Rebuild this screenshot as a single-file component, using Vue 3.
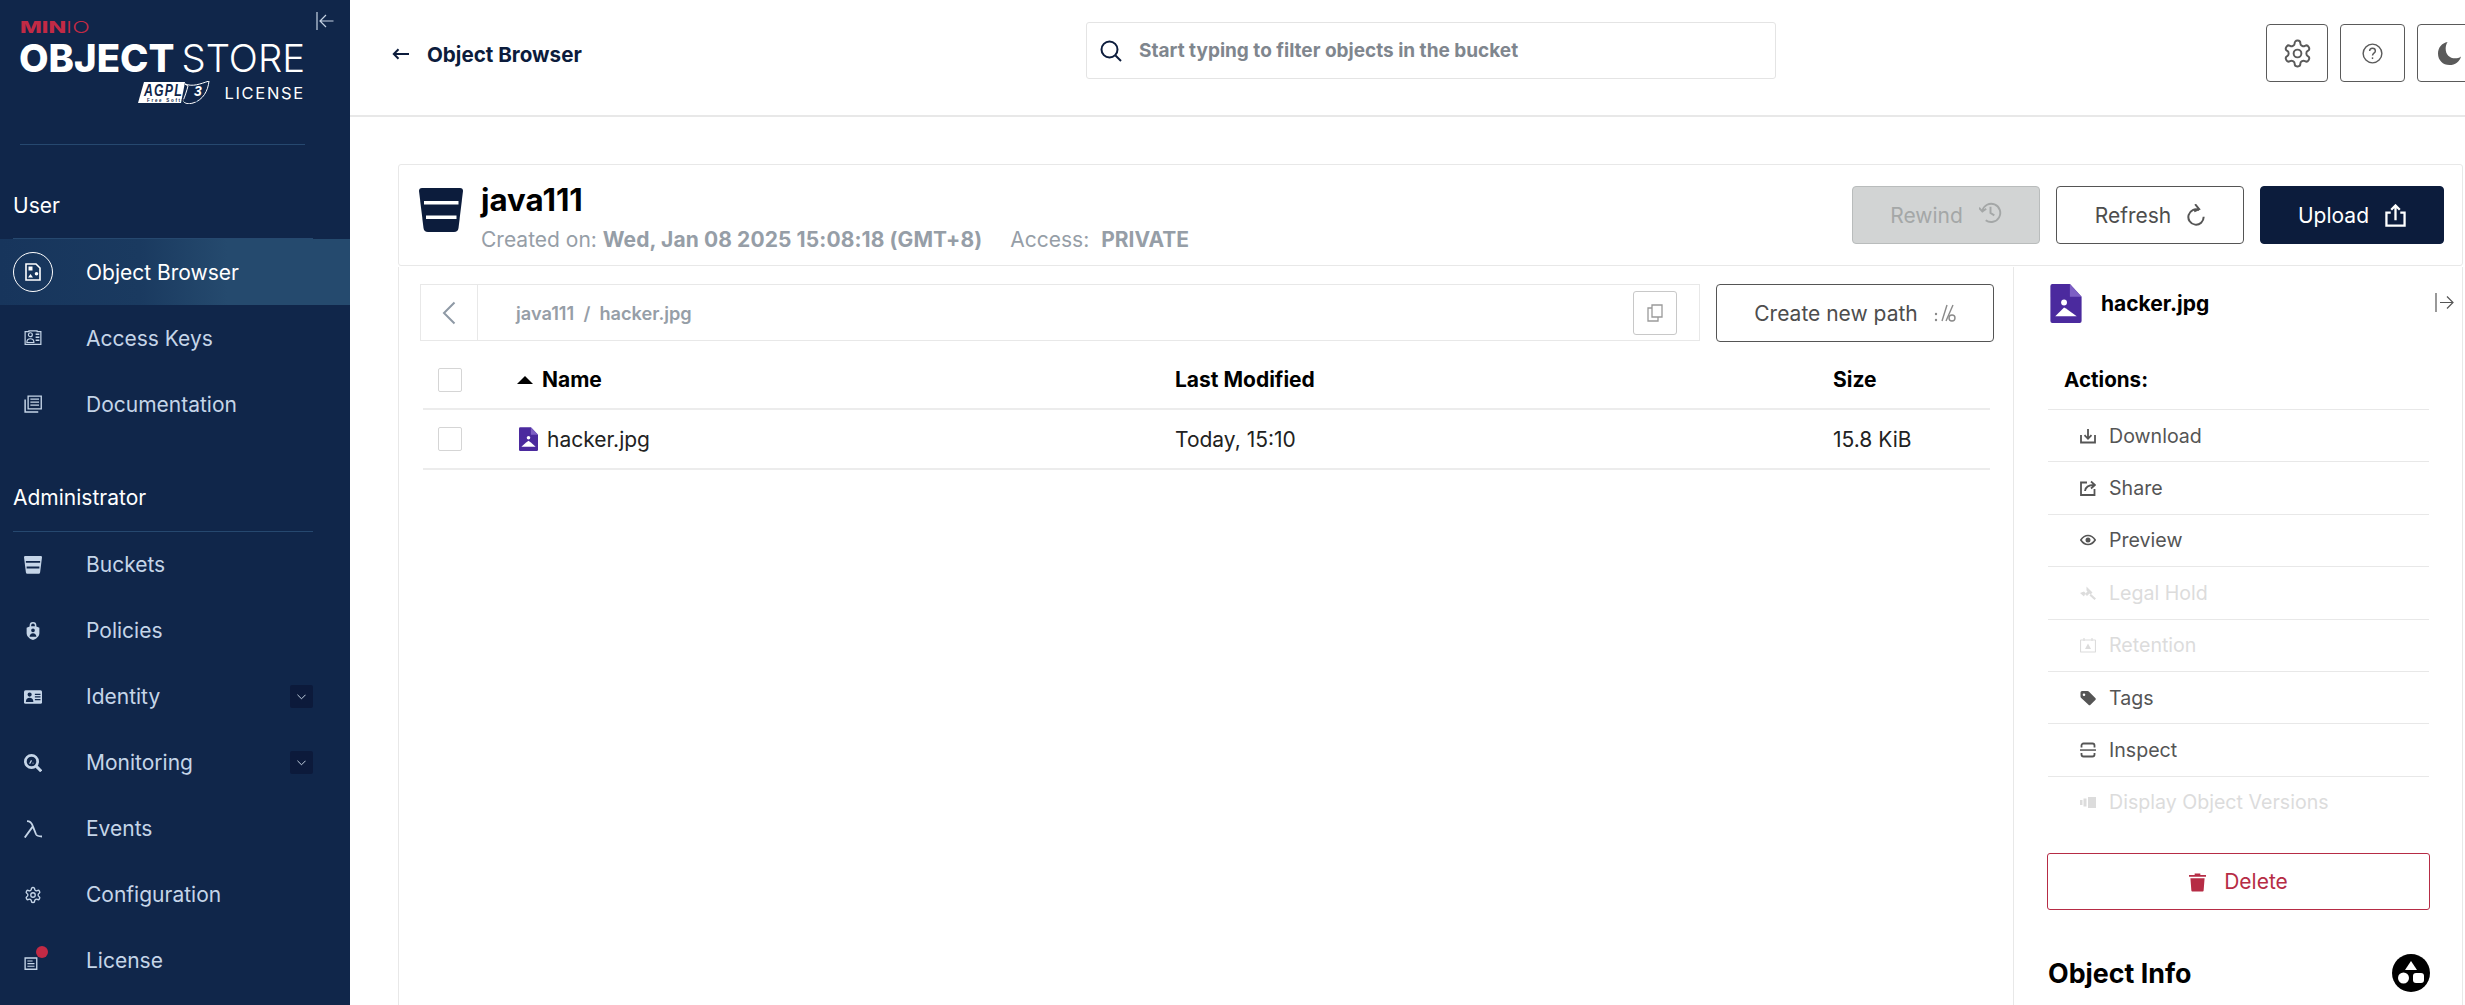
<script setup>
const GEAR = 'M12.22 2h-.44a2 2 0 0 0-2 2v.18a2 2 0 0 1-1 1.73l-.43.25a2 2 0 0 1-2 0l-.15-.08a2 2 0 0 0-2.73.73l-.22.38a2 2 0 0 0 .73 2.73l.15.1a2 2 0 0 1 1 1.72v.51a2 2 0 0 1-1 1.74l-.15.09a2 2 0 0 0-.73 2.73l.22.38a2 2 0 0 0 2.73.73l.15-.08a2 2 0 0 1 2 0l.43.25a2 2 0 0 1 1 1.73V20a2 2 0 0 0 2 2h.44a2 2 0 0 0 2-2v-.18a2 2 0 0 1 1-1.73l.43-.25a2 2 0 0 1 2 0l.15.08a2 2 0 0 0 2.73-.73l.22-.39a2 2 0 0 0-.73-2.73l-.15-.08a2 2 0 0 1-1-1.74v-.5a2 2 0 0 1 1-1.74l.15-.09a2 2 0 0 0 .73-2.73l-.22-.38a2 2 0 0 0-2.73-.73l-.15.08a2 2 0 0 1-2 0l-.43-.25a2 2 0 0 1-1-1.73V4a2 2 0 0 0-2-2zM12 9a3 3 0 1 0 0 6 3 3 0 0 0 0-6z'

const userItems = [
  { label: 'Access Keys', paths: [
    { s: 'M1.500 3.500h5v-1h11v1h5v17h-21z', w: 1.600 },
    { s: 'M8.500 5a2.600 2.600 0 1 0 0 5.200 2.600 2.600 0 0 0 0-5.200zM3.800 18c0-3.400 2-5 4.700-5s4.700 1.600 4.700 5z', w: 1.600 },
    { s: 'M15.500 7h5M15.500 11h5M15.500 15h5', w: 1.800 }
  ] },
  { label: 'Documentation', paths: [
    { s: 'M5.500 1.500h17.500v17H5.500z', w: 1.800 },
    { s: 'M8.500 5.500h11.500M8.500 9.500h11.500M8.500 13.500h11.500', w: 1.800 },
    { s: 'M1.500 6v16.500h17.500', w: 2 }
  ] }
]

const adminItems = [
  { label: 'Buckets', paths: [
    { f: 'M0 1.500Q0 0 1.500 0h21Q24 0 24 1.500L21.500 21.500q-.2 2-2 2h-15q-1.800 0-2-2z' },
    { f: 'M2.500 6.500h19V9h-19zM3.500 14h17v2.800H3.500z', c: '#10264a' }
  ] },
  { label: 'Policies', paths: [
    { f: 'M12 0a4.500 4.500 0 0 1 4.500 4.500V6L20.500 7.500v7.500C20.500 19 16.500 22.500 12 24 7.500 22.500 3.500 19 3.500 15V7.500L7.500 6V4.500A4.500 4.500 0 0 1 12 0zm0 2a2.500 2.500 0 0 0-2.500 2.500V5.500h5V4.500A2.500 2.500 0 0 0 12 2z' },
    { f: 'M12 8.500a2.500 2.500 0 1 0 0 5 2.500 2.500 0 0 0 0-5zM7.500 19.500c0-2.800 2-4.500 4.500-4.500s4.500 1.700 4.500 4.500z', c: '#10264a' }
  ] },
  { label: 'Identity', chevron: true, paths: [
    { f: 'M2 3h20a2 2 0 0 1 2 2v14a2 2 0 0 1-2 2H2a2 2 0 0 1-2-2V5a2 2 0 0 1 2-2z' },
    { f: 'M7.500 6a2.800 2.800 0 1 0 0 5.600 2.800 2.800 0 0 0 0-5.600zM2.500 18.500c0-3.500 2.200-5.500 5-5.500s5 2 5 5.500zM14.500 7.500H22v1.800h-7.500zM14.500 11H22v1.800h-7.500zM14.500 14.500H22v1.800h-7.500z', c: '#10264a' }
  ] },
  { label: 'Monitoring', chevron: true, paths: [
    { s: 'M10 1.800a8.200 8.200 0 1 0 0 16.400 8.200 8.200 0 0 0 0-16.400z', w: 3.600 },
    { s: 'M15.500 15.500L23 23', w: 4 },
    { s: 'M7.500 13l2.500-4.500M12 12.500v-1', w: 1.600 }
  ] },
  { label: 'Events', paths: [
    { s: 'M4 1.500c4.500 0 6 1.500 7.500 6l4.500 11.500c.9 2 2.500 3 8 3M11.800 8.500L1 23.500', w: 2.400 }
  ] },
  { label: 'Configuration', paths: [
    { s: GEAR, w: 1.800 }
  ] },
  { label: 'License', badge: true, paths: [
    { s: 'M1.500 8h15.500v15H1.500z', w: 1.800 },
    { s: 'M4.500 12h7M4.500 15.500h9.500M4.500 19h9.500', w: 1.600 }
  ] }
]

const actions = [
  { label: 'Download', paths: [
    { s: 'M1 7v7.500h14V7', w: 1.800 },
    { s: 'M8 1v9.500M4.500 7.200L8 10.800l3.500-3.600', w: 1.800 }
  ] },
  { label: 'Share', paths: [
    { s: 'M7 2.500H1v12.500h13.500V9', w: 1.800 },
    { s: 'M5 11c.5-4 3-6 9-6M11 1.500L15 5l-4 3.500', w: 1.800 }
  ] },
  { label: 'Preview', paths: [
    { s: 'M.8 8C3 4.700 5.300 3.500 8 3.500S13 4.700 15.200 8C13 11.300 10.700 12.500 8 12.500S3 11.300.8 8z', w: 1.600 },
    { f: 'M8 5.500a2.500 2.500 0 1 0 0 5 2.500 2.500 0 0 0 0-5z' }
  ] },
  { label: 'Legal Hold', disabled: true, paths: [
    { f: 'M6.500 1.500l6 6-2 2-1-1L7 11 5 9l2.500-2.500-1-1zM0 8l4-1.500L5.500 8 4 11.500zM9.500 10.500l1.500-1.500 5 4.500-1.500 1.500z' }
  ] },
  { label: 'Retention', disabled: true, paths: [
    { s: 'M1 3h14a.5.5 0 0 1 .5.5v11a.5.5 0 0 1-.5.5H1a.5.5 0 0 1-.5-.5v-11A.5.5 0 0 1 1 3zM4 1v3M12 1v3', w: 1.200 },
    { f: 'M8 6.500L11 12H5z' }
  ] },
  { label: 'Tags', paths: [
    { f: 'M.5 2.500Q.5 1 2 1h5.500q.8 0 1.300.5l6.500 6.500q1 1 0 2l-4.800 4.800q-1 1-2 0L1.500 8.300Q.5 7.500.5 6.500zM4 3.500a1.300 1.300 0 1 0 0 2.600 1.300 1.300 0 0 0 0-2.600z' }
  ] },
  { label: 'Inspect', paths: [
    { s: 'M1.500 5.500V3.500a2 2 0 0 1 2-2h9a2 2 0 0 1 2 2v2M1.500 11v1.500a2 2 0 0 0 2 2h9a2 2 0 0 0 2-2V11', w: 1.800 },
    { f: 'M0 7.300h16v1.500H0z' }
  ] },
  { label: 'Display Object Versions', disabled: true, paths: [
    { f: 'M0 6h2.500v5H0zM3.500 4.500h3v8h-3zM8 3h8v11H8z' }
  ] }
]
</script>

<template>
  <div class="app">
    <aside class="sidebar">
      <div class="brand-area">
        <div class="logo">
          <div class="minio"><span class="min">MIN</span><span class="io">IO</span></div>
          <div class="product"><b>OBJECT</b><span>STORE</span></div>
          <div class="license-line">
            <svg class="agpl" viewBox="0 0 72 23">
              <path d="M6 1H47L43 22H0z" fill="#fff" />
              <path d="M47 3c8 3 15 0 24-3-1 10-6 19-16 22-5 1.500-8 .5-10-2 2-5 4-11 5-15z" fill="#10264a" stroke="#fff" stroke-width="1" />
              <text x="6" y="15" textLength="39" lengthAdjust="spacingAndGlyphs" class="agpl-t">AGPL</text>
              <text x="56" y="15" class="agpl-3">3</text>
              <text x="9" y="20.500" class="agpl-s">Free Software</text>
            </svg>
            <span>LICENSE</span>
          </div>
        </div>
        <svg class="collapse" viewBox="0 0 18 18" fill="none" stroke="#c5d2e3" stroke-width="1.200">
          <path d="M1 0v18M17.500 9H4M10 3L4 9l6 6" />
        </svg>
      </div>
      <div class="brand-rule"></div>

      <div class="section-title">User</div>
      <div class="nav-row active">
        <span class="nav-icon ring">
          <svg viewBox="0 0 16 18" width="16" height="18" fill="none" stroke="#fff" stroke-width="1.600">
            <path d="M1 1h10l4 4v12H1z" />
            <path d="M3.500 3.500h4v4h-4zM11.500 9a1.800 1.800 0 1 0 0 3.600 1.800 1.800 0 0 0 0-3.600zM5.500 11l2.500 3.500H3z" fill="#fff" stroke="none" />
          </svg>
        </span>
        <span>Object Browser</span>
      </div>
      <div v-for="item in userItems" :key="item.label" class="nav-row">
        <span class="nav-icon">
          <svg viewBox="0 0 24 24" width="18" height="18">
            <path v-for="(p, i) in item.paths" :key="i" :d="p.s || p.f" :fill="p.f ? (p.c || 'currentColor') : 'none'" :stroke="p.s ? 'currentColor' : 'none'" :stroke-width="p.w || 1.800" />
          </svg>
        </span>
        <span>{{ item.label }}</span>
      </div>

      <div class="section-title admin">Administrator</div>
      <div v-for="item in adminItems" :key="item.label" class="nav-row lift">
        <span class="nav-icon">
          <svg viewBox="0 0 24 24" width="18" height="18">
            <path v-for="(p, i) in item.paths" :key="i" :d="p.s || p.f" :fill="p.f ? (p.c || 'currentColor') : 'none'" :stroke="p.s ? 'currentColor' : 'none'" :stroke-width="p.w || 1.800" />
          </svg>
          <i v-if="item.badge" class="dot"></i>
        </span>
        <span>{{ item.label }}</span>
        <span v-if="item.chevron" class="chev">
          <svg viewBox="0 0 10 6" width="9" height="6" fill="none" stroke="#c5d2e3" stroke-width="1.100"><path d="M.5.500L5 5 9.500.500" /></svg>
        </span>
      </div>
    </aside>

    <main class="main">
      <header class="topbar">
        <div class="crumb">
          <svg viewBox="0 0 17 12" width="17" height="12" fill="none" stroke="#0c1c3c" stroke-width="2"><path d="M17 6H2M6.500 1.200L1.800 6l4.700 4.800" /></svg>
          <span>Object Browser</span>
        </div>
        <div class="search">
          <svg viewBox="0 0 22 22" width="22" height="22" fill="none" stroke="#0c1c3c" stroke-width="2"><circle cx="9.500" cy="9.500" r="8" /><path d="M15.500 15.500L21 21" /></svg>
          <span>Start typing to filter objects in the bucket</span>
        </div>
        <button class="icon-btn gear">
          <svg viewBox="0 0 24 24" width="31" height="31" fill="none" stroke="#5a5a5a" stroke-width="1.500"><path :d="GEAR" /></svg>
        </button>
        <button class="icon-btn help">
          <svg viewBox="0 0 22 22" width="21" height="21" fill="none" stroke="#5a5a5a" stroke-width="1.500">
            <circle cx="11" cy="11" r="9.800" /><path d="M8 8.500c0-1.800 1.300-3 3-3s3 1.100 3 2.800c0 2.300-3 2.400-3 4.700" /><path d="M11 15v1.800" />
          </svg>
        </button>
        <button class="icon-btn moon">
          <svg viewBox="0 0 24 24" width="23" height="23" fill="#5a5a5a"><path d="M10 0C4 1 0 6 0 12c0 7 5 12 12 12 6 0 10.500-3.500 12-9-2 1.500-4 2-6 2-6 0-10-4-10-10 0-2.500.6-5 2-7z" /></svg>
        </button>
      </header>

      <section class="content">
        <div class="panel-head">
          <svg class="bucket" viewBox="0 0 44 44">
            <path d="M0 3Q0 0 3 0H41Q44 0 44 3L39.500 40Q39 44 35 44H9Q5 44 4.500 40Z" fill="#0c1c3c" />
            <path d="M5 13H39.500V16.500H5zM7 27.500H37.500V31H7z" fill="#fff" />
          </svg>
          <div class="head-text">
            <h1>java111</h1>
            <p>Created on: <b class="date">Wed, Jan 08 2025 15:08:18 (GMT+8)</b><span class="access">Access:</span><b>PRIVATE</b></p>
          </div>
          <div class="head-actions">
            <button class="btn disabled">Rewind
              <svg class="rewind-i" viewBox="0 0 24 24" width="23" height="23" fill="none" stroke="#a4a7a7" stroke-width="2"><path d="M3.500 10A9.500 9.500 0 1 1 7 20M12 6v6.500l4 2.500M0 7l3.500 4L7.500 8" /></svg>
            </button>
            <button class="btn outline">Refresh
              <svg viewBox="0 0 20 24" width="18" height="22" fill="none" stroke="#555" stroke-width="2.200"><path d="M13.500 6.500A8.500 8.500 0 1 0 18.500 14M9 0l4.500 5.500L8 8" /></svg>
            </button>
            <button class="btn primary">Upload
              <svg viewBox="0 0 22 24" width="21" height="23" fill="none" stroke="#fff" stroke-width="2.400"><path d="M6 9H1.500v13.500h19V9H16M11 17V2M6.500 6L11 1.500 15.500 6" /></svg>
            </button>
          </div>
        </div>

        <div class="panel-body">
          <div class="browser">
            <div class="toolbar">
              <div class="path-box">
                <div class="path-back">
                  <svg viewBox="0 0 14 24" width="14" height="24" fill="none" stroke="#8e99a5" stroke-width="2"><path d="M12.500 1.500L2 12l10.500 10.500" /></svg>
                </div>
                <div class="path-text">java111&nbsp; / &nbsp;hacker.jpg</div>
                <button class="copy">
                  <svg viewBox="0 0 16 18" width="16" height="18" fill="none" stroke="#9a9a9a" stroke-width="1.300"><path d="M5 1h10v12H5zM5 4H1v13h10v-4" /></svg>
                </button>
              </div>
              <button class="btn outline create">Create new path
                <svg viewBox="0 0 22 20" width="22" height="20" fill="none" stroke="#8a8a8a" stroke-width="1.400"><path d="M8 18L13 2M12 18L19 2" /><circle cx="18" cy="15" r="3" /><circle cx="2" cy="11" r="1.200" fill="#8a8a8a" stroke="none" /><circle cx="2" cy="17" r="1.200" fill="#8a8a8a" stroke="none" /></svg>
              </button>
            </div>

            <div class="tbl-row tbl-head">
              <span class="check"></span>
              <span class="name"><i class="sort"></i>Name</span>
              <span>Last Modified</span>
              <span>Size</span>
            </div>
            <div class="tbl-row tbl-data">
              <span class="check"></span>
              <span class="name">
                <svg viewBox="0 0 32 40" width="19" height="24"><path d="M2 0H20L32 13V38Q32 40 30 40H2Q0 40 0 38V2Q0 0 2 0Z" fill="#4b2a9e" /><path d="M20 0L32 13H20Z" fill="#7d5fc4" /><circle cx="16" cy="18" r="3" fill="#fff" /><path d="M4 33L12 26L16 23L20 26L28 33Z" fill="#fff" /></svg>
                hacker.jpg
              </span>
              <span>Today, 15:10</span>
              <span>15.8 KiB</span>
            </div>
          </div>

          <aside class="detail">
            <div class="detail-head">
              <svg viewBox="0 0 32 40" width="32" height="39"><path d="M2 0H20L32 13V38Q32 40 30 40H2Q0 40 0 38V2Q0 0 2 0Z" fill="#4b2a9e" /><path d="M20 0L32 13H20Z" fill="#7d5fc4" /><circle cx="14" cy="19" r="3" fill="#fff" /><path d="M5 33L14 24L16 25L27 33Z" fill="#fff" /></svg>
              <h2>hacker.jpg</h2>
              <svg class="expand" viewBox="0 0 19 19" width="19" height="19" fill="none" stroke="#555" stroke-width="1.200"><path d="M1 0v19M18 9.500H5M12 3.500l6 6-6 6" /></svg>
            </div>
            <div class="actions-title">Actions:</div>
            <div v-for="a in actions" :key="a.label" class="action" :class="{ off: a.disabled }">
              <svg viewBox="0 0 16 16" width="16" height="16">
                <path v-for="(p, i) in a.paths" :key="i" :d="p.s || p.f" :fill="p.f ? 'currentColor' : 'none'" :stroke="p.s ? 'currentColor' : 'none'" :stroke-width="p.w || 1.500" />
              </svg>
              <span>{{ a.label }}</span>
            </div>
            <button class="delete">
              <svg viewBox="0 0 18 20" width="17" height="20" fill="#b62c45"><path d="M0 2.500H6V1h6v1.500H18V4.500H0zM1.500 6H16.500L15.500 19Q15.400 20 14.500 20H3.500Q2.600 20 2.500 19z" /></svg>
              Delete
            </button>
            <div class="info-head">
              <h3>Object Info</h3>
              <svg viewBox="0 0 38 38" width="38" height="38"><circle cx="19" cy="19" r="19" fill="#000" /><path d="M19 7L25 16H13Z" fill="#fff" /><circle cx="11.500" cy="24" r="5.500" fill="#fff" /><rect x="21" y="19" width="11" height="10" rx="3" fill="#fff" /></svg>
            </div>
          </aside>
        </div>
      </section>
    </main>
  </div>
</template>

<style scoped>
.app { display: flex; width: 2465px; height: 1005px; overflow: hidden; background: #fff; font-family: Inter, "Liberation Sans", sans-serif; color: #000; }
button { font-family: inherit; cursor: pointer; }
h1, h2, h3, p { margin: 0; }

.sidebar { width: 350px; flex-shrink: 0; background: #10264a; color: #c5d5e8; font-size: 21px; }
.brand-area { display: flex; height: 104px; padding: 21px 0 0 19px; box-sizing: border-box; }
.logo { width: 286px; color: #fff; }
.minio { height: 12px; line-height: 12px; margin-left: 1px; font-size: 16.500px; color: #c22a45; transform: scaleX(1.400); transform-origin: left; white-space: nowrap; }
.min { font-weight: 800; }
.io { font-weight: 300; }
.product { display: flex; justify-content: space-between; height: 28px; line-height: 28px; margin-top: 11px; font-size: 38.300px; white-space: nowrap; }
.product b { font-weight: 800; }
.product span { font-weight: 300; }
.license-line { display: flex; justify-content: flex-end; align-items: center; gap: 14px; height: 23px; margin-top: 9px; font-size: 16.500px; letter-spacing: 1.700px; }
.agpl { width: 72px; height: 23px; }
.agpl-t { font: italic 700 17px "Liberation Sans", sans-serif; fill: #10264a; }
.agpl-3 { font: italic 700 14px "Liberation Sans", sans-serif; fill: #fff; }
.agpl-s { font: 700 4.500px "Liberation Sans", sans-serif; fill: #10264a; }
.collapse { width: 18px; height: 18px; margin: -9px 0 0 11px; flex-shrink: 0; }
.brand-rule { height: 1px; margin: 40px 45px 0 20px; background: #26486f; }

.section-title { margin: 0 37px 0 13px; padding: 49px 0 20px; line-height: 24px; font-size: 21px; color: #fff; border-bottom: 1px solid #26486f; }
.section-title.admin { padding-bottom: 21px; }
.nav-row { display: flex; align-items: center; height: 66px; box-sizing: border-box; padding-left: 13px; }
.nav-row.lift { padding-bottom: 1px; }
.nav-row.active { color: #fff; background: linear-gradient(90deg, #17355c 0%, #1a3a60 40%, #254a6e 65%); }
.nav-icon { position: relative; display: flex; align-items: center; justify-content: center; width: 40px; height: 40px; margin-right: 33px; color: #c5d5e8; }
.ring { border: 1px solid #fff; border-radius: 50%; box-sizing: border-box; }
.dot { position: absolute; top: 5px; right: 5px; width: 12px; height: 12px; border-radius: 50%; background: #c22a45; }
.chev { display: flex; align-items: center; justify-content: center; width: 23px; height: 23px; margin: 0 37px 0 auto; background: #0c1a3b; border-radius: 2px; }

.main { flex: 1; min-width: 0; }
.topbar { display: flex; align-items: flex-start; height: 117px; box-sizing: border-box; padding-top: 22px; border-bottom: 2px solid #e8e8e8; }
.crumb { display: flex; align-items: center; gap: 18px; width: 694px; margin-left: 42px; height: 64px; font-size: 20.600px; font-weight: 700; color: #0c1c3c; flex-shrink: 0; }
.search { display: flex; align-items: center; gap: 17px; width: 690px; height: 57px; box-sizing: border-box; padding-left: 13px; border: 1px solid #e4e4e4; border-radius: 3px; font-size: 19px; font-weight: 700; color: #7f868e; flex-shrink: 0; }
.icon-btn { display: flex; align-items: center; justify-content: center; height: 58px; margin-top: 2px; padding: 0; background: #fff; border: 1px solid #5a5a5a; border-radius: 4px; flex-shrink: 0; }
.gear { width: 62px; margin-left: 490px; }
.help { width: 65px; margin-left: 12px; }
.moon { width: 62px; margin-left: 12px; justify-content: flex-start; padding-left: 20px; }

.content { padding: 47px 0 0 48px; }
.panel-head { display: flex; align-items: flex-start; width: 2065px; height: 102px; box-sizing: border-box; padding: 21px 18px 0 20px; border: 1px solid #e8e8e8; border-radius: 3px; }
.bucket { width: 44px; height: 44px; margin: 2px 18px 0 0; flex-shrink: 0; }
.head-text { margin-top: -1px; }
h1 { font-size: 31.250px; line-height: 30px; font-weight: 700; }
.head-text p { margin-top: 12px; line-height: 26px; font-size: 21px; color: #969ea7; white-space: nowrap; }
.head-text b { font-weight: 700; }
.date { letter-spacing: .1px; }
.access { margin: 0 12px 0 28px; }
.head-actions { display: flex; gap: 16px; margin-left: auto; }
.btn { display: flex; align-items: center; justify-content: center; gap: 16px; width: 188px; height: 58px; padding: 0; border-radius: 4px; font-size: 21px; }
.rewind-i { margin-top: -6px; }
.disabled { background: #d2d4d4; border: 1px solid #b9bcbc; color: #a4a7a7; }
.outline { background: #fff; border: 1px solid #555; color: #4d4d4d; }
.primary { width: 184px; background: #0c1c3c; border: 1px solid #0c1c3c; color: #fff; }

.panel-body { display: flex; width: 2065px; height: 800px; margin-top: 1px; box-sizing: border-box; border-left: 1px solid #e8e8e8; border-right: 1px solid #e8e8e8; }
.browser { width: 1614px; flex-shrink: 0; box-sizing: border-box; padding: 17px 0 0 21px; }
.toolbar { display: flex; align-items: flex-start; gap: 16px; }
.path-box { display: flex; align-items: center; width: 1280px; height: 57px; box-sizing: border-box; border: 1px solid #e8e8e8; flex-shrink: 0; }
.path-back { display: flex; align-items: center; justify-content: center; width: 56px; height: 100%; border-right: 1px solid #e8e8e8; flex-shrink: 0; }
.path-text { margin-left: 38px; font-size: 18.200px; font-weight: 600; color: #969ea7; }
.copy { display: flex; align-items: center; justify-content: center; width: 44px; height: 44px; margin: 0 22px 0 auto; padding: 0; background: #fff; border: 1px solid #c8c8c8; border-radius: 3px; }
.create { width: 278px; }

.tbl-row { display: grid; grid-template-columns: 94px 658px 658px 1fr; align-items: center; width: 1567px; margin-left: 3px; border-bottom: 2px solid #ececec; font-size: 21px; box-sizing: border-box; }
.tbl-head { height: 59px; margin-top: 9px; font-weight: 700; }
.tbl-data { height: 60px; color: #222; }
.check { display: block; width: 24px; height: 24px; margin-left: 15px; box-sizing: border-box; border: 1px solid #d5d5d5; border-radius: 2px; background: #fff; }
.name { display: flex; align-items: center; }
.tbl-head .name { gap: 9px; }
.tbl-data .name { gap: 9px; padding-left: 2px; }
.sort { width: 0; height: 0; border-left: 8.500px solid transparent; border-right: 8.500px solid transparent; border-bottom: 8px solid #000; }

.detail { width: 449px; box-sizing: border-box; padding: 17px 0 0 34px; border-left: 1px solid #e8e8e8; }
.detail-head { display: flex; align-items: center; height: 39px; margin-left: 2px; }
.detail-head h2 { margin-left: 19px; font-size: 21px; font-weight: 700; }
.expand { margin: -2px 8px 0 auto; }
.actions-title { margin: 45px 0 17px 16px; line-height: 24px; font-size: 20.600px; font-weight: 700; }
.action { display: flex; align-items: center; gap: 13px; width: 381px; height: 52.400px; box-sizing: border-box; padding-left: 32px; border-top: 1px solid #e8e8e8; font-size: 19.600px; color: #555; }
.action.off { color: #dcdcdc; }
.delete { display: flex; align-items: center; justify-content: center; gap: 18px; width: 383px; height: 57px; margin: 25px 0 0 -1px; padding: 0; background: #fff; border: 1px solid #b62c45; border-radius: 3px; font-size: 21px; color: #b62c45; }
.info-head { display: flex; align-items: center; justify-content: space-between; width: 382px; margin-top: 44px; }
.info-head h3 { font-size: 26.800px; line-height: 38px; font-weight: 700; }
</style>
